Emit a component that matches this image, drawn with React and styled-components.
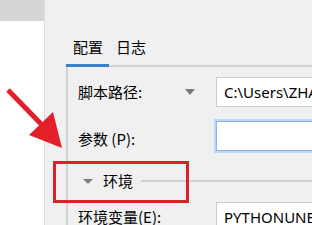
import React from "react";
import styled, { createGlobalStyle } from "styled-components";

const Global = createGlobalStyle`
  html, body { margin: 0; padding: 0; }
  body {
    width: 312px;
    height: 225px;
    overflow: hidden;
    background: #f0f0f0;
    font-family: "Noto Sans CJK SC", "Noto Sans", sans-serif;
  }
`;

const Page = styled.div`
  position: relative;
  display: flex;
  width: 312px;
  height: 225px;
  overflow: hidden;
  font-size: 15px;
  color: #000;
`;

const Sidebar = styled.div`
  width: 44px;
  flex: none;
  display: flex;
  flex-direction: column;
  border-right: 1px solid #dddddd;
`;

const SidebarHeader = styled.div`
  height: 21px;
  background: #d6d6d6;
`;

const SidebarBody = styled.div`
  flex: 1;
  background: #ffffff;
`;

const Main = styled.div`
  flex: 1;
  min-width: 0;
  background: #f0f0f0;
  padding: 37px 0 0 21px;
  display: flex;
  flex-direction: column;
`;

const TabBar = styled.div`
  display: flex;
  border-bottom: 2px solid #d2d2d2;
`;

const Tab = styled.div`
  line-height: 20px;
  padding: 0 6px 7px 7px;
  margin-bottom: -2px;
  border-bottom: 3px solid ${(p) => (p.$active ? "#3d7ec8" : "transparent")};
  white-space: nowrap;
`;

const Frame = styled.div`
  flex: 1;
  border-left: 2px solid #d2d2d2;
  padding: 10px 0 0 10px;
  display: flex;
  flex-direction: column;
`;

const Row = styled.div`
  display: grid;
  grid-template-columns: 107px 31px 1fr;
  align-items: center;
  margin-top: ${(p) => p.$gap || 0}px;
`;

const Label = styled.div`
  white-space: nowrap;
  line-height: 20px;
  padding-top: ${(p) => p.$nudge || 0}px;
`;

const DropArrow = styled.div`
  width: 0;
  height: 0;
  border-left: 5px solid transparent;
  border-right: 5px solid transparent;
  border-top: 6px solid #7a7a7a;
`;

const Input = styled.div`
  height: 30px;
  box-sizing: border-box;
  background: #fff;
  border: 1px solid ${(p) => (p.$focus ? "#86b4e8" : "#cccccc")};
  box-shadow: ${(p) => (p.$focus ? "0 0 0 2px #bcd6f3" : "none")};
  border-right: none;
  padding: 0 0 0 7px;
  display: flex;
  align-items: center;
  font-family: "Noto Sans", "Noto Sans CJK SC", sans-serif;
  font-size: 15px;
  white-space: nowrap;
  overflow: hidden;
`;

const Section = styled.div`
  height: 40px;
  margin-top: 10px;
  display: flex;
  align-items: center;
  padding-left: 5px;
`;

const SectionArrow = styled.div`
  width: 0;
  height: 0;
  border-left: 5px solid transparent;
  border-right: 5px solid transparent;
  border-top: 5px solid #808080;
  margin-right: 10px;
`;

const SectionTitle = styled.div`
  line-height: 20px;
  white-space: nowrap;
  margin-right: 8px;
`;

const SectionLine = styled.div`
  flex: 1;
  height: 2px;
  background: #d2d2d2;
`;

const Highlight = styled.div`
  position: absolute;
  left: 53px;
  top: 161px;
  width: 136px;
  height: 42px;
  box-sizing: border-box;
  border: 3px solid #d9232b;
  pointer-events: none;
`;

const Overlay = styled.svg`
  position: absolute;
  left: 0;
  top: 0;
  pointer-events: none;
`;

export default function App() {
  return (
    <>
      <Global />
      <Page>
        <Sidebar>
          <SidebarHeader />
          <SidebarBody />
        </Sidebar>
        <Main>
          <TabBar>
            <Tab $active>配置</Tab>
            <Tab>日志</Tab>
          </TabBar>
          <Frame>
            <Row>
              <Label>脚本路径:</Label>
              <DropArrow />
              <Input>C:\Users\ZHANG</Input>
            </Row>
            <Row $gap={14}>
              <Label $nudge={6}>参数 (P):</Label>
              <span />
              <Input $focus />
            </Row>
            <Section>
              <SectionArrow />
              <SectionTitle>环境</SectionTitle>
              <SectionLine />
            </Section>
            <Row $gap={1}>
              <Label>环境变量(E):</Label>
              <span />
              <Input>PYTHONUNBUFFERED=1</Input>
            </Row>
          </Frame>
        </Main>
        <Highlight />
        <Overlay width="312" height="225" viewBox="0 0 312 225">
          <line x1="8" y1="90" x2="44" y2="127" stroke="#e3202a" strokeWidth="5" strokeLinecap="butt" />
          <polygon points="29,135 53,112 62,148" fill="#e3202a" />
        </Overlay>
      </Page>
    </>
  );
}
